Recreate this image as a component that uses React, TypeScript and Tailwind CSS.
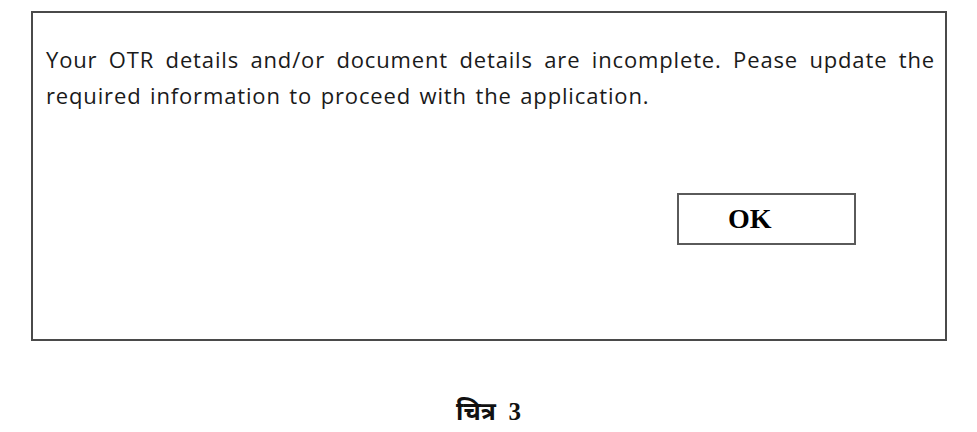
export default function App() {
  return (
    <div className="h-[432px] w-[977px] bg-white">
      <div className="pt-[11px] pl-[31px]">
        <div className="h-[330px] w-[916px] border-2 border-[#4a4a4a] pl-[13px] pt-[28px]">
          <p
            className="w-[892px] text-[22px] leading-[36px] tracking-[0.85px] [word-spacing:2px] text-[#1a1a1a]"
            style={{ fontFamily: '"Open Sans", "Noto Sans", sans-serif' }}
          >
            <span className="block w-[889px] text-justify [text-align-last:justify]">
              Your OTR details and/or document details are incomplete. Pease update the
            </span>
            <span className="block">required information to proceed with the application.</span>
          </p>
          <div className="mt-[80px] pl-[631px]">
            <button
              className="flex h-[52px] w-[179px] items-center border-2 border-[#5a5a5a] pl-[49px] text-[28px] font-bold text-black"
              style={{ fontFamily: '"Liberation Serif", serif' }}
            >
              OK
            </button>
          </div>
        </div>
      </div>
      <p
        className="mt-[52px] text-center text-[25px] font-bold text-[#111]"
        style={{ fontFamily: '"Liberation Serif", "Noto Sans", serif' }}
      >
        चित्र&nbsp; 3
      </p>
    </div>
  );
}
